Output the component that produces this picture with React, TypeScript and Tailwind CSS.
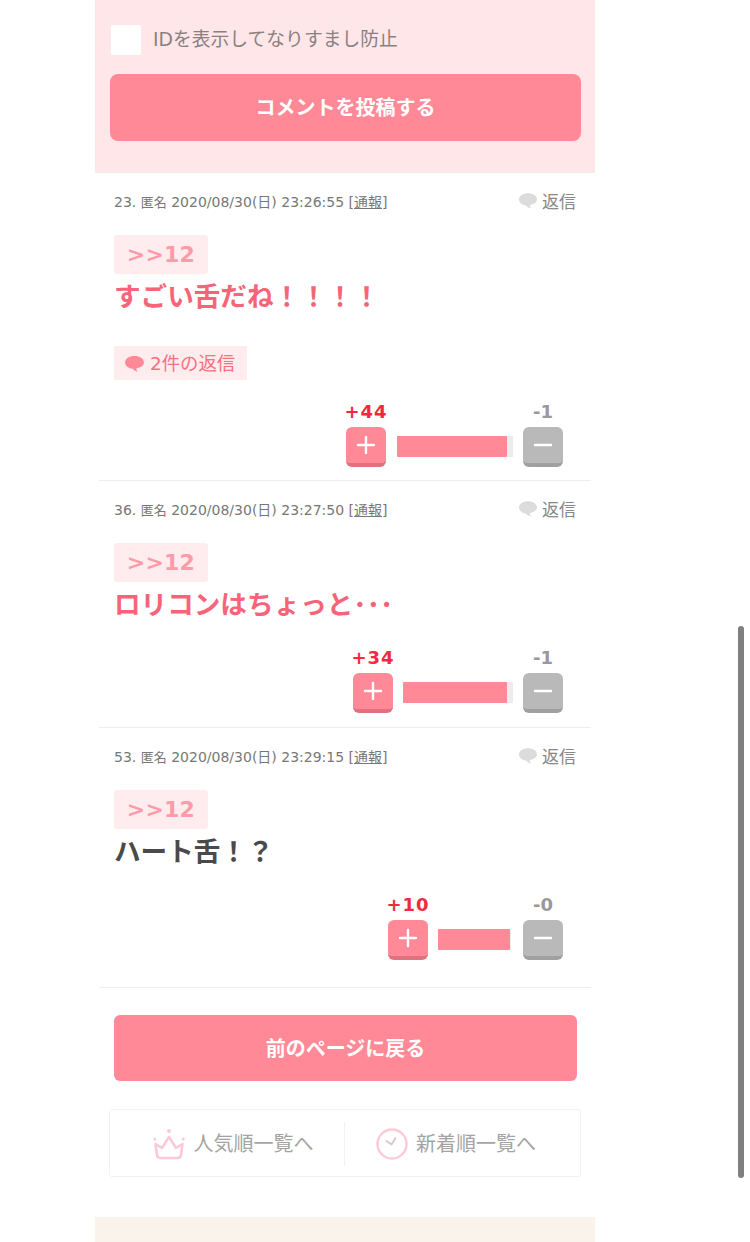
const FONT = "font-['DejaVu_Sans','Noto_Sans_CJK_JP',sans-serif]";

type Comment = {
  no: string;
  date: string;
  title: string;
  titleColor: string;
  replies?: string;
  plus: string;
  minus: string;
  barWidth: string;
  barFill: string;
  bottomGap: string;
};

const COMMENTS: Comment[] = [
  {
    no: "23.",
    date: "2020/08/30(日) 23:26:55",
    title: "すごい舌だね！！！！",
    titleColor: "text-[#f7647a]",
    replies: "2件の返信",
    plus: "+44",
    minus: "-1",
    barWidth: "ml-[1px] w-[116px]",
    barFill: "w-[110px]",
    bottomGap: "pb-[13px]",
  },
  {
    no: "36.",
    date: "2020/08/30(日) 23:27:50",
    title: "ロリコンはちょっと･･･",
    titleColor: "text-[#f7647a]",
    plus: "+34",
    minus: "-1",
    barWidth: "w-[110px]",
    barFill: "w-[104px]",
    bottomGap: "pb-[14px]",
  },
  {
    no: "53.",
    date: "2020/08/30(日) 23:29:15",
    title: "ハート舌！？",
    titleColor: "text-[#4a4a4a]",
    plus: "+10",
    minus: "-0",
    barWidth: "mr-[2px] w-[73px]",
    barFill: "w-[72px]",
    bottomGap: "pb-[27px]",
  },
];

function Bubble({ className }: { className: string }) {
  return (
    <svg viewBox="0 0 20 17" className={className} fill="currentColor">
      <path d="M10 0C4.500 0 0 2.900 0 6.800c0 3.400 3.200 6 7.600 6.600 1.400 1.600 3.400 3 6 3.300-1-1-1.600-2.300-1.600-3.700 4.600-.8 8-3.200 8-6.200C20 2.900 15.500 0 10 0z" />
    </svg>
  );
}

function CrownIcon() {
  return (
    <svg viewBox="0 0 32 32" className="h-[32px] w-[32px]" fill="none" stroke="#fdc9d6" strokeWidth="2.600" strokeLinejoin="round">
      <circle cx="16" cy="3" r="2" fill="#fdc9d6" stroke="none" />
      <circle cx="1.800" cy="11" r="1.500" fill="#fdc9d6" stroke="none" />
      <circle cx="30.200" cy="11" r="1.500" fill="#fdc9d6" stroke="none" />
      <path d="M2.500 16 L9 20 L16 9 L23 20 L29.500 16 L28 27 Q27.600 30 25 30 L7 30 Q4.400 30 4 27 Z" />
    </svg>
  );
}

function ClockIcon() {
  return (
    <svg viewBox="0 0 32 32" className="h-[32px] w-[32px]" fill="none" stroke="#fdc9d6" strokeWidth="2.400" strokeLinecap="round" strokeLinejoin="round">
      <circle cx="16" cy="16" r="14.500" />
      <path d="M10.500 13 L15.500 16.500 L19.500 10" stroke="#d9c9cd" strokeWidth="2" />
    </svg>
  );
}

function VoteButton({ color, shadow, children }: { color: string; shadow: string; children: React.ReactNode }) {
  return (
    <div className={`flex h-10 w-10 items-center justify-center rounded-[6px] border-b-4 ${color} ${shadow}`}>
      {children}
    </div>
  );
}

function CommentRow({ c }: { c: Comment }) {
  return (
    <article className={`mx-1 border-t border-[#eeeeee] px-[15px] first-of-type:border-t-0 ${c.bottomGap}`}>
      <div className="mt-[14px] flex h-[28px] items-center justify-between pt-[2px]">
        <p className="text-[14px] text-[#777777]">
          {c.no} <span className="text-[13px]">匿名</span> {c.date}{" "}
          <span>
            [<span className="underline">通報</span>]
          </span>
        </p>
        <div className="flex items-center gap-[5px] text-[17px] text-[#888888]">
          <Bubble className="h-[16px] w-[18px] -translate-y-[1px] text-[#dcdcdc]" />
          <span className="translate-y-[1px]">返信</span>
        </div>
      </div>

      <div className="mt-[20px] flex h-[39px] w-[94px] items-center justify-center rounded-[3px] bg-[#ffecee] text-[22px] font-bold tracking-[0.2px] text-[#ff9aa8]">
        &gt;&gt;12
      </div>
      <h3 className={`h-[44px] text-[26.6px] font-bold leading-[46px] ${c.titleColor}`}>{c.title}</h3>

      {c.replies && (
        <div className="mt-[28px] flex h-[34px] w-[133px] items-center gap-[6px] bg-[#ffecee] pl-[11px] pt-[2px] text-[18.400px] text-[#f9707f]">
          <Bubble className="h-[16px] w-[19px] text-[#ff8996]" />
          <span>{c.replies}</span>
        </div>
      )}

      <div className="mt-[22px] flex items-end justify-end gap-[10px] pr-[13px]">
        <div className="flex w-10 flex-col items-center gap-[5px]">
          <span className="h-[20px] text-[18px] font-bold leading-[20px] tracking-[1px] whitespace-nowrap text-[#f5283e]">{c.plus}</span>
          <VoteButton color="bg-[#ff8996]" shadow="border-[#e0727f]">
            <svg viewBox="0 0 20 20" className="h-5 w-5" stroke="#ffffff" strokeWidth="2.400" strokeLinecap="round">
              <path d="M10 2 V18 M2 10 H18" />
            </svg>
          </VoteButton>
        </div>
        <div className={`mb-[10px] h-[21px] bg-[#ececec] ${c.barWidth}`}>
          <div className={`h-full rounded-[1px] bg-[#ff8996] ${c.barFill}`} />
        </div>
        <div className="flex w-10 flex-col items-center gap-[5px]">
          <span className="h-[20px] text-[18px] font-bold leading-[20px] text-[#999999]">{c.minus}</span>
          <VoteButton color="bg-[#b9b9b9]" shadow="border-[#a0a0a0]">
            <svg viewBox="0 0 20 20" className="h-5 w-5" stroke="#ffffff" strokeWidth="2.400" strokeLinecap="round">
              <path d="M2 10 H18" />
            </svg>
          </VoteButton>
        </div>
      </div>
    </article>
  );
}

export default function App() {
  return (
    <div className={`relative flex h-[1242px] w-[750px] flex-col overflow-hidden bg-white ${FONT}`}>
      <main className="ml-[95px] flex w-[500px] flex-1 flex-col">
        {/* 投稿フォーム下部 */}
        <section className="h-[173px] border-b border-[#eeeeee] bg-[#ffe6e8] px-[15px]">
          <label className="flex h-[74px] items-center gap-[12px] pl-[1px] pt-[6px] text-[18.800px] text-[#8a8080]">
            <span className="h-[30px] w-[30px] rounded-[2px] bg-white" />
            <span>IDを表示してなりすまし防止</span>
          </label>
          <button className="flex h-[67px] w-[471px] items-center justify-center rounded-[8px] bg-[#ff8996] text-[20px] font-bold text-white">
            コメントを投稿する
          </button>
        </section>

        {COMMENTS.map((c) => (
          <CommentRow key={c.no} c={c} />
        ))}

        <div className="mx-1 border-t border-[#eeeeee] pt-[27px]">
          <button className="mx-[15px] flex h-[66px] w-[463px] items-center justify-center rounded-[6px] bg-[#ff8996] pt-[2px] text-[20px] font-bold text-white">
            前のページに戻る
          </button>
        </div>

        <nav className="mx-[14px] mt-[28px] flex h-[68px] items-center rounded-[3px] border border-[#f2f2f2] pt-[1px] text-[20px] text-[#a3a3a3]">
          <a className="flex h-[44px] w-[235px] items-center justify-center gap-[9px] border-r border-[#f2f2f2] pl-[12px]">
            <CrownIcon />
            <span>人気順一覧へ</span>
          </a>
          <a className="flex h-[44px] flex-1 items-center justify-center gap-[8px] pr-[13px]">
            <ClockIcon />
            <span>新着順一覧へ</span>
          </a>
        </nav>

        <footer className="mt-[40px] flex-1 bg-[#faf3ec]" />
      </main>

      {/* スクロールバー */}
      <div className="absolute left-[738px] top-[626px] h-[552px] w-[6px] rounded-[3px] bg-[#7f7f7f]" />
    </div>
  );
}
